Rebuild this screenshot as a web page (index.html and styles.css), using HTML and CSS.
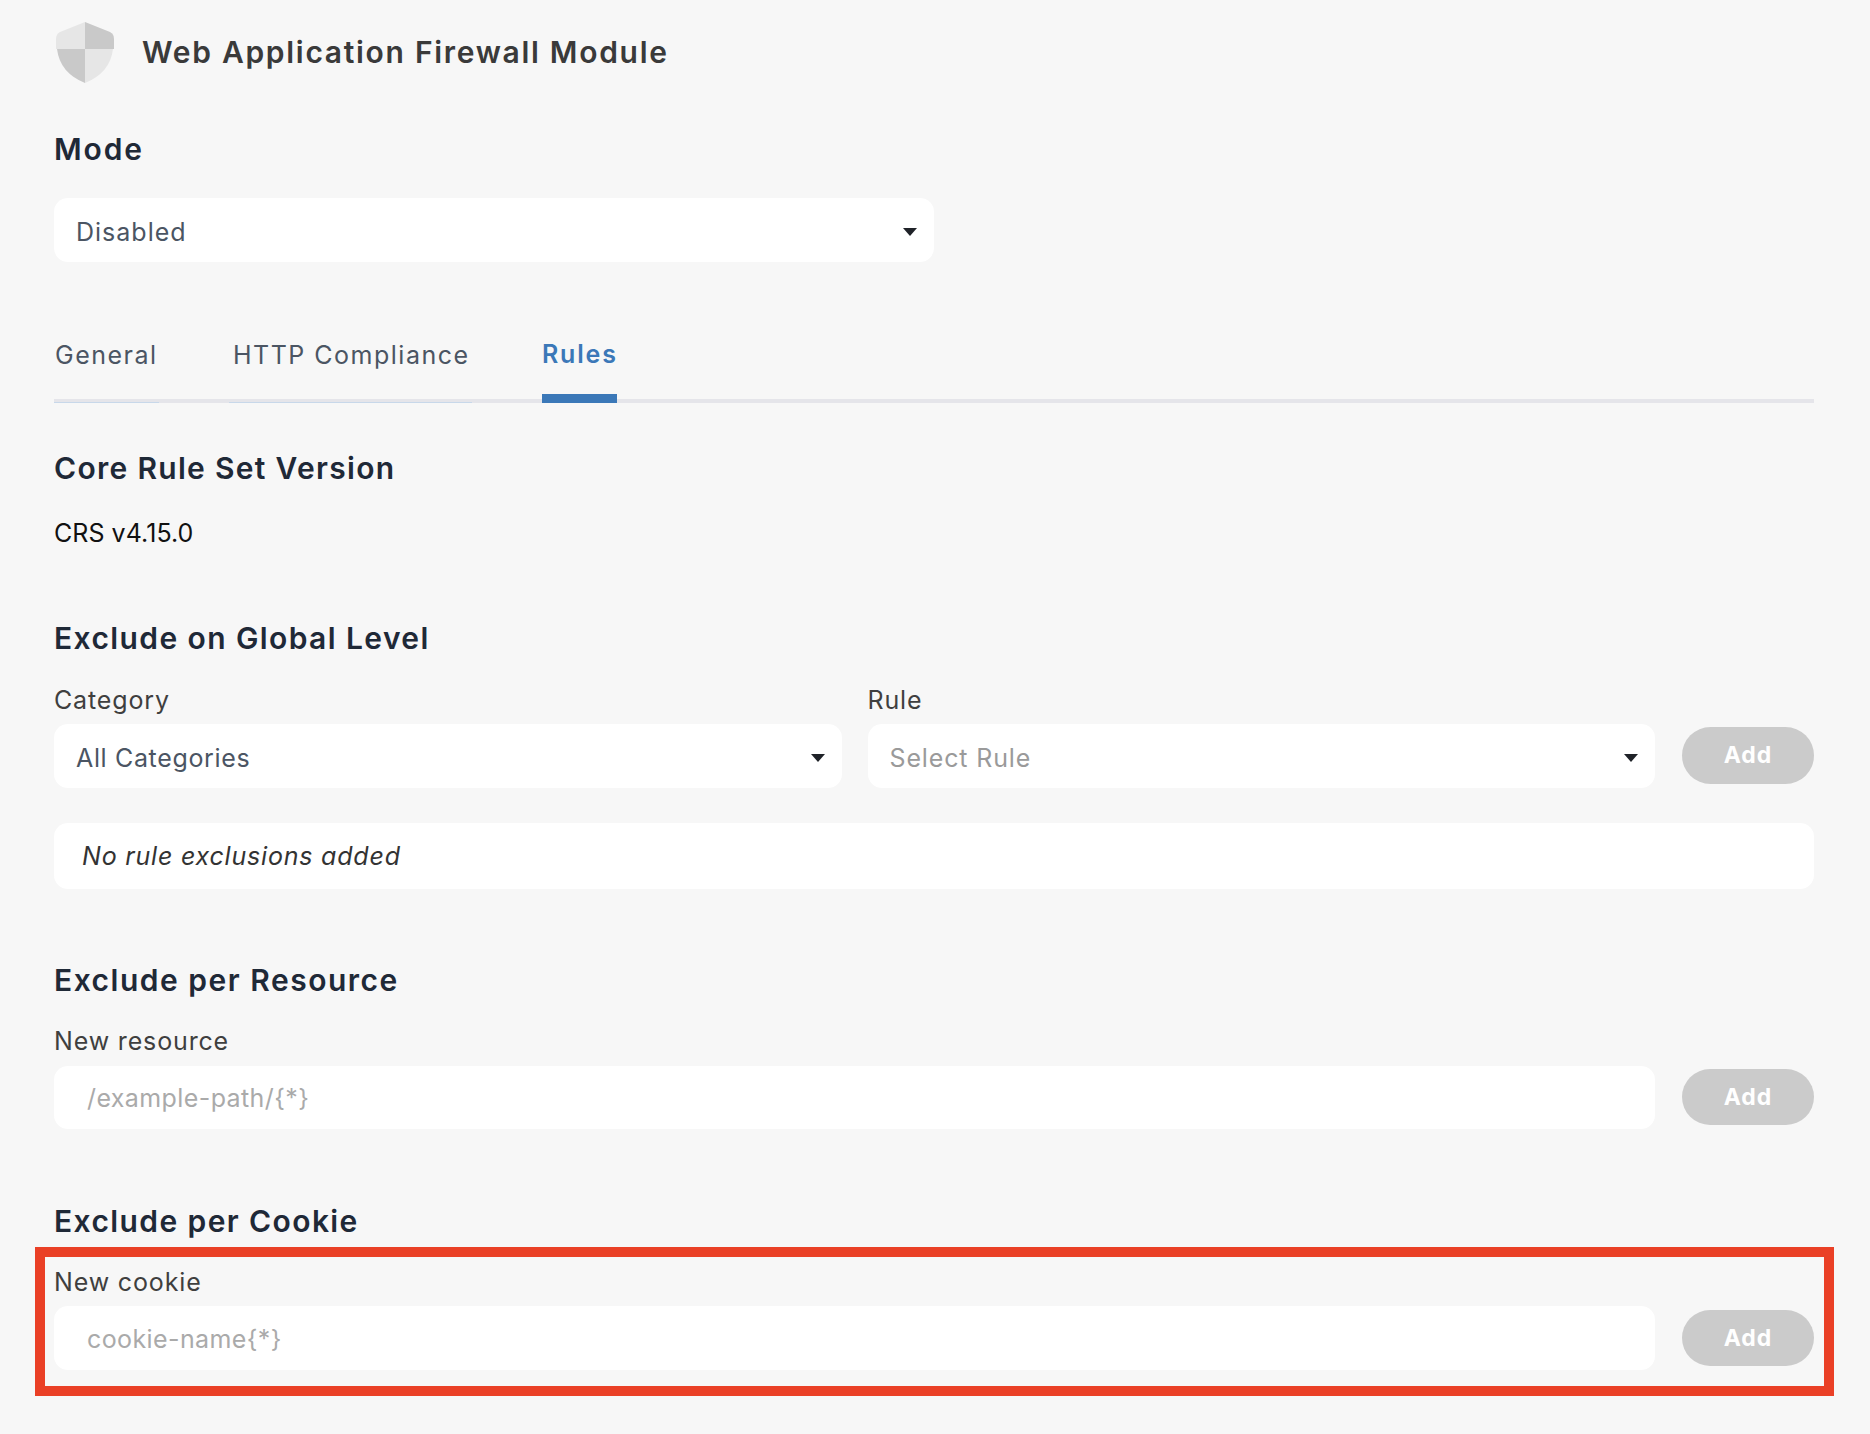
FILE: index.html
```html
<!DOCTYPE html>
<html lang="en">
<head>
<meta charset="utf-8">
<title>Web Application Firewall Module</title>
<link rel="stylesheet" href="styles.css">
</head>
<body>
<main class="page">
  <header class="module-header">
    <svg class="shield" width="58" height="61" viewBox="0 0 58 61" aria-hidden="true">
      <path fill="#e6e6e6" d="M29 0 L4 10 Q0 12 0 17 L0 27 L29 27 Z"/>
      <path fill="#c9c9c9" d="M29 0 L54 10 Q58 12 58 17 L58 27 L29 27 Z"/>
      <path fill="#c9c9c9" d="M1 27 Q4 51 29 61 L29 27 Z"/>
      <path fill="#e6e6e6" d="M57 27 Q54 51 29 61 L29 27 Z"/>
    </svg>
    <h1 class="module-title">Web Application Firewall Module</h1>
  </header>

  <h2 class="heading heading-mode">Mode</h2>
  <div class="select select-mode"><span class="select-value select-value-wide">Disabled</span><svg class="caret" width="14" height="8" viewBox="0 0 14 8"><path d="M0 0H14L7 8Z"/></svg></div>

  <nav class="tabs">
    <a class="tab tab-general">General</a>
    <a class="tab tab-http">HTTP Compliance</a>
    <a class="tab tab-rules">Rules</a>
  </nav>

  <h2 class="heading heading-crs">Core Rule Set Version</h2>
  <p class="crs">CRS v4.15.0</p>

  <h2 class="heading heading-global">Exclude on Global Level</h2>
  <div class="labels">
    <label class="label">Category</label>
    <label class="label">Rule</label>
    <span class="label-spacer"></span>
  </div>
  <div class="row">
    <div class="select select-grow"><span class="select-value">All Categories</span><svg class="caret" width="14" height="8" viewBox="0 0 14 8"><path d="M0 0H14L7 8Z"/></svg></div>
    <div class="select select-grow"><span class="select-value muted">Select Rule</span><svg class="caret" width="14" height="8" viewBox="0 0 14 8"><path d="M0 0H14L7 8Z"/></svg></div>
    <button class="add add-global" type="button">Add</button>
  </div>
  <div class="empty">No rule exclusions added</div>

  <h2 class="heading heading-resource">Exclude per Resource</h2>
  <label class="label label-block">New resource</label>
  <div class="row row-resource">
    <input class="text-input" type="text" placeholder="/example-path/{*}">
    <button class="add add-resource" type="button">Add</button>
  </div>

  <h2 class="heading heading-cookie">Exclude per Cookie</h2>
  <section class="highlight">
    <label class="label label-block">New cookie</label>
    <div class="row">
      <input class="text-input text-input-cookie" type="text" placeholder="cookie-name{*}">
      <button class="add" type="button">Add</button>
    </div>
  </section>
</main>
</body>
</html>
```

FILE: styles.css
```css
* { box-sizing: border-box; }
html, body { margin: 0; padding: 0; }
body {
  background: #f7f7f7;
  font-family: Inter, "Liberation Sans", sans-serif;
  color: #3f3f3f;
  height: 1434px;
  overflow: hidden;
}
.page { padding: 22px 56px 0 54px; }
.module-header { display: flex; align-items: center; gap: 28px; padding-left: 2px; height: 61px; }
.shield { flex: none; }
.module-title { margin: 0; font-size: 30px; font-weight: 600; color: #3a3a3a; letter-spacing: 1.7px; line-height: 36px; position: relative; top: -1px; }
.heading { margin: 0; font-size: 30px; line-height: 36px; font-weight: 600; color: #1f2937; letter-spacing: 1.4px; }
.heading-mode { margin-top: 48px; letter-spacing: 1.9px; }
.heading-crs { margin-top: 47px; letter-spacing: 1.3px; }
.heading-global { margin-top: 71px; }
.heading-resource { margin-top: 73px; letter-spacing: 1.5px; }
.heading-cookie { margin-top: 74px; }

.select {
  display: flex; align-items: center; justify-content: space-between;
  height: 64px; padding: 0 17px 0 22px;
  background: #fff; border-radius: 14px;
  font-size: 25px; color: #4b5563;
}
.select-value { letter-spacing: .65px; padding-top: 3px; }
.select-value-wide { letter-spacing: 1px; }
.select-mode { width: 880px; margin-top: 31px; }
.select-grow { flex: 1 1 0; min-width: 0; }
.caret { flex: none; fill: #1f2228; margin-top: 3px; }
.muted { color: #9a9a9a; letter-spacing: .85px; }

.tabs { display: flex; margin-top: 75px; border-bottom: 4px solid #e5e5ea; height: 66px; }
.tab { display: block; height: 66px; padding: 0 2px; font-size: 25px; line-height: 36px; color: #4b5563; letter-spacing: 1.5px; border-bottom: 1px solid #c8d8ea; white-space: nowrap; }
.tab-general { width: 105px; padding-left: 1px; margin-right: 70px; }
.tab-http { width: 243px; padding-left: 4px; margin-right: 70px; }
.tab-rules { width: 75px; padding: 0; line-height: 34px; letter-spacing: 1.8px; color: #3b78b8; font-weight: 600; border-bottom: 9px solid #3b78b8; }

.crs { margin: 31px 0 0; font-size: 25px; line-height: 32px; color: #111; letter-spacing: .05px; }

.labels { display: flex; gap: 26px; margin-top: 29px; }
.labels .label { flex: 1 1 0; }
.label-spacer { width: 133px; flex: none; }
.label { display: block; font-size: 25px; line-height: 30px; color: #3f3f3f; letter-spacing: .85px; }
.label-block { margin-top: 28px; }
.row { display: flex; align-items: flex-start; gap: 26px; margin-top: 9px; }
.row-resource { margin-top: 10px; }
.add {
  flex: none; width: 132px; height: 56px; margin: 4px 0 0 1px; border: 0; border-radius: 29px;
  background: #cbcbcb; color: #fff; font: 700 23px/1 Inter, "Liberation Sans", sans-serif; letter-spacing: 1px;
}
.add-global { height: 57px; margin-top: 3px; }
.add-resource { margin-top: 3px; }
.empty {
  height: 66px; margin-top: 35px; padding-left: 28px;
  display: flex; align-items: center;
  background: #fff; border-radius: 14px;
  font-size: 25px; font-style: italic; color: #333; letter-spacing: .8px;
}
.text-input {
  flex: 1 1 0; min-width: 0; height: 63px; border: 0; outline: 0; border-radius: 14px;
  background: #fff; padding: 0 0 0 33px;
  font: 400 25px Inter, "Liberation Sans", sans-serif; letter-spacing: .4px;
}
.text-input-cookie { height: 64px; padding-top: 2px; }
.text-input::placeholder { color: #aaa; opacity: 1; }

.highlight {
  margin: 8px -20px 0 -19px;
  padding: 10px 10px 16px 9px;
  border: 10px solid #ea4026;
}
.highlight .label-block { margin-top: 0; }
```
